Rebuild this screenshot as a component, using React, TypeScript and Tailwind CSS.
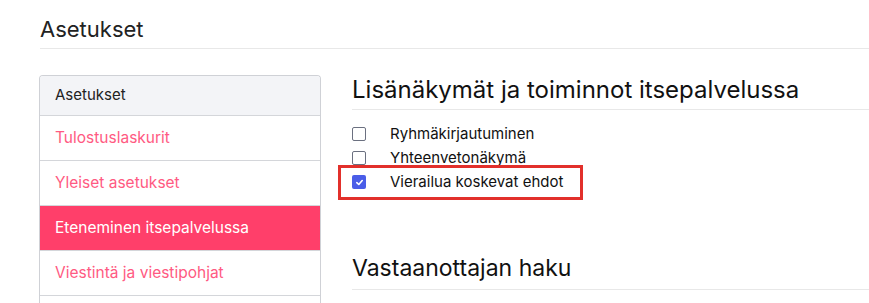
const menu = [
  { label: "Tulostuslaskurit", active: false },
  { label: "Yleiset asetukset", active: false },
  { label: "Eteneminen itsepalvelussa", active: true },
  { label: "Viestintä ja viestipohjat", active: false },
  { label: "", active: false },
]

const options = [
  { label: "Ryhmäkirjautuminen", checked: false },
  { label: "Yhteenvetonäkymä", checked: false },
  { label: "Vierailua koskevat ehdot", checked: true },
]

function Checkbox({ checked }: { checked: boolean }) {
  if (checked) {
    return (
      <span className="flex h-[14px] w-[14px] shrink-0 items-center justify-center rounded-[2px] bg-[#4a5de8]">
        <svg width="9" height="9" viewBox="0 0 10 10" fill="none">
          <path d="M2 5.2 L4.2 7.2 L8 2.8" stroke="white" strokeWidth="1.8" strokeLinecap="round" strokeLinejoin="round" />
        </svg>
      </span>
    )
  }
  return <span className="h-[14px] w-[14px] shrink-0 rounded-[2px] border border-[#6b7080] bg-white" />
}

export default function App() {
  return (
    <div className="h-[303px] w-[869px] overflow-hidden bg-white pl-[40px] font-['Inter',sans-serif] text-[#111]">
      <div className="flex h-[49px] items-end border-b border-[#e8e8e8] pb-[5px]">
        <h1 className="text-[22px] leading-[28px] text-[#222]">Asetukset</h1>
      </div>

      <div className="mt-[26px] flex gap-[31px]">
        <nav className="-ml-px w-[282px] shrink-0 overflow-hidden rounded-t-[4px] border border-b-0 border-[#cfd1d6]">
          <div className="flex h-[40px] items-center border-b border-[#d4d6da] bg-[#f3f4f7] px-[15px] text-[15px] text-[#222]">
            Asetukset
          </div>
          {menu.map((item, i) => (
            <div
              key={i}
              className={
                item.active
                  ? "flex h-[45px] items-center border-b border-[#d4d6da] bg-[#ff3f6a] px-[15px] text-[15.5px] text-white"
                  : "flex h-[45px] items-center border-b border-[#d4d6da] px-[15px] text-[15.5px] text-[#ff5a82]"
              }
            >
              {item.label}
            </div>
          ))}
        </nav>

        <main className="flex-1">
          <h2 className="flex h-[35px] items-center border-b border-[#e8e8e8] pb-[4px] text-[24px] text-[#111]">
            Lisänäkymät ja toiminnot itsepalvelussa
          </h2>
          <div className="mt-[12px] flex flex-col">
            {options.map((opt) => (
              <div key={opt.label} className="relative flex h-[24px] items-center gap-[24px]">
                {opt.checked && (
                  <span className="absolute left-[-14px] top-[-5px] h-[35px] w-[245px] border-[3px] border-[#e2302b]" />
                )}
                <Checkbox checked={opt.checked} />
                <span className="text-[15px] text-[#111]">{opt.label}</span>
              </div>
            ))}
          </div>
          <h2 className="mt-[61px] flex h-[35px] items-center border-b border-[#e8e8e8] pb-[8px] text-[23px] text-[#111]">
            Vastaanottajan haku
          </h2>
        </main>
      </div>
    </div>
  )
}
